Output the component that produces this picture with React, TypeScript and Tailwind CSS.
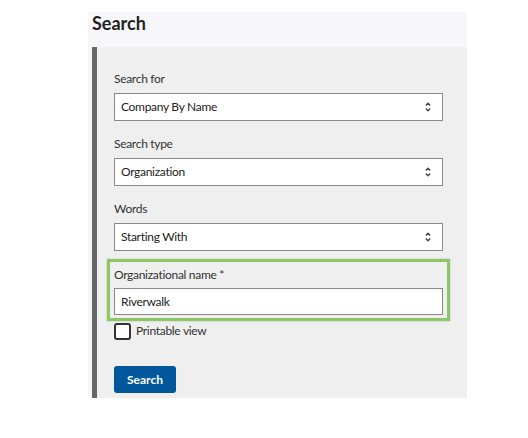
const font = { fontFamily: "Lato, 'Noto Sans', sans-serif" };

const UpDown = () => (
  <svg width="8" height="12" viewBox="0 0 8 12" fill="none" stroke="#444" strokeWidth="1.4">
    <path d="M1.8 4.5 L4 2.3 L6.2 4.5" />
    <path d="M1.8 7.5 L4 9.7 L6.2 7.5" />
  </svg>
);

const SelectField = ({ label, value }: { label: string; value: string }) => (
  <div className="flex flex-col">
    <label className="mb-[6px] text-[12px] leading-4 tracking-[-0.3px] text-[#333]">{label}</label>
    <div className="flex h-[28px] items-center justify-between border border-[#8a8a8a] bg-white pl-[6px] pr-[10px]">
      <span className="text-[12px] tracking-[-0.3px] text-[#222]">{value}</span>
      <UpDown />
    </div>
  </div>
);

export default function App() {
  return (
    <div className="h-[438px] w-[528px] bg-white pl-[88px] pt-[12px]" style={font}>
      <div className="w-[379px] bg-[#f7f7fb]">
        <h1 className="h-[35px] pl-[4px] pt-[1px] text-[18px] font-bold leading-[20px] text-[#222]">Search</h1>
        <div className="ml-[4px] border-l-[5px] border-[#666] bg-[#efefef] pb-[5px] pl-[17px] pr-[24px] pt-[24px]">
          <div className="flex flex-col gap-[15px]">
            <SelectField label="Search for" value="Company By Name" />
            <SelectField label="Search type" value="Organization" />
            <SelectField label="Words" value="Starting With" />
          </div>
          <div className="-mx-[7px] mt-[8px] border-[3px] border-[#8cc862] px-[4px] pb-[3px] pt-[5px] shadow-[0_0_2px_rgba(0,0,0,0.2)]">
            <label className="mb-[5px] block text-[12px] leading-4 tracking-[-0.3px] text-[#333]">Organizational name *</label>
            <div className="flex h-[27px] items-center border border-[#8a8a8a] bg-white pl-[6px]">
              <span className="text-[12px] tracking-[-0.3px] text-[#222]">Riverwalk</span>
            </div>
          </div>
          <div className="mt-[1px] flex items-center gap-[5px]">
            <span className="h-[17px] w-[17px] rounded-[3px] border-2 border-[#333] bg-white" />
            <span className="text-[12px] tracking-[-0.3px] text-[#333]">Printable view</span>
          </div>
          <button className="mt-[26px] h-[27px] w-[62px] rounded-[3px] bg-[#00579b] text-[12px] font-bold text-white">
            Search
          </button>
        </div>
      </div>
    </div>
  );
}
